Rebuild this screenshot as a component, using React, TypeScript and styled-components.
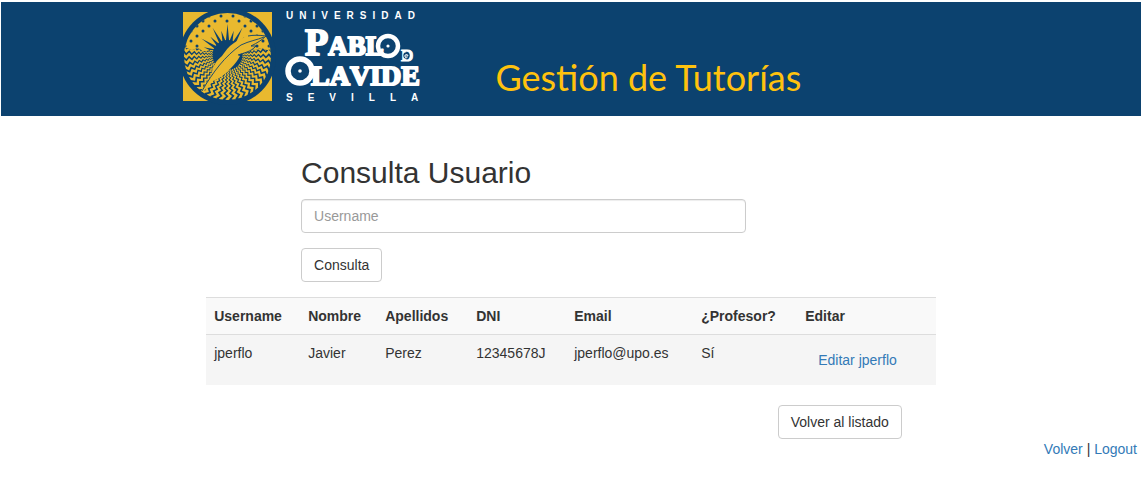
import React from "react";
import styled, { createGlobalStyle } from "styled-components";

const NAVY = "#0c426f";
const GOLD = "#e9b92f";

const GlobalStyle = createGlobalStyle`
  *, *::before, *::after { box-sizing: border-box; }
  body {
    margin: 0;
    background: #fff;
    color: #333;
    font-family: "Liberation Sans", Arial, sans-serif;
    font-size: 14px;
    line-height: 20px;
  }
`;

const Page = styled.div`
  padding: 2px 2px 0 1px;
`;

const Banner = styled.header`
  display: flex;
  align-items: flex-start;
  height: 114px;
  padding-left: 16%;
  background: ${NAVY};
`;

const LogoLink = styled.a`
  display: block;
  flex: none;
  padding-top: 6px;
`;

const Wordmark = styled.g`
  fill: #fff;
  stroke: #fff;
  stroke-width: 2px;
  stroke-linejoin: round;
  font-family: "Liberation Serif", "Times New Roman", serif;
  font-weight: 700;
  font-kerning: none;
`;

const BannerTitle = styled.div`
  margin: 53px 0 0 52px;
  color: #ffc20e;
  font-family: Lato, sans-serif;
  font-size: 36px;
  line-height: 44px;
  white-space: nowrap;
`;

const Content = styled.main`
  width: 64%;
  margin: 0 auto;
  padding-top: 20px;
`;

const SearchForm = styled.form`
  width: 61%;
  margin-left: 13%;
`;

const Heading = styled.h2`
  margin: 20px 0 10px;
  font-size: 30px;
  font-weight: 400;
  line-height: 33px;
`;

const TextField = styled.input`
  display: block;
  width: 100%;
  height: 34px;
  margin-bottom: 15px;
  padding: 6px 12px;
  border: 1px solid #ccc;
  border-radius: 4px;
  background: #fff;
  box-shadow: inset 0 1px 1px rgba(0, 0, 0, 0.075);
  color: #555;
  font: inherit;

  &::placeholder {
    color: #999;
    opacity: 1;
  }
`;

const Button = styled.button`
  display: inline-block;
  padding: 6px 12px;
  border: 1px solid #ccc;
  border-radius: 4px;
  background: #fff;
  color: #333;
  font: inherit;
  white-space: nowrap;
  cursor: pointer;
`;

const Link = styled.a`
  color: #337ab7;
  text-decoration: none;
`;

const ButtonLink = styled(Link)`
  display: inline-block;
  padding: 6px 12px;
  border: 1px solid transparent;
  vertical-align: middle;
  white-space: nowrap;
`;

const Table = styled.table`
  width: 100%;
  margin: 15px 0 20px;
  table-layout: fixed;
  border-collapse: collapse;
  text-align: left;
`;

const Column = styled.col<{ $width: number }>`
  width: ${({ $width }) => $width}px;
`;

const HeadCell = styled.th`
  padding: 8px;
  border-top: 1px solid #ddd;
  border-bottom: 1px solid #ddd;
  background: #f9f9f9;
`;

const Cell = styled.td`
  padding: 8px;
  background: #f5f5f5;
  vertical-align: top;
`;

const Actions = styled.div`
  display: flex;
  justify-content: flex-end;
  padding-right: 34px;
`;

const Footer = styled.footer`
  padding-right: 4px;
  text-align: right;
`;

/* One zigzag ray of the lower half of the seal, widening away from the centre. */
const wavyRay = (angle: number, width: number) => {
  const radii: number[] = [];
  for (let r = 13; r <= 48; r *= 1.075) radii.push(r);
  const point = (r: number, i: number, shift: number) => {
    const a = angle + shift + (i % 2 ? 0.038 : -0.038);
    return `${(44.5 + r * Math.cos(a)).toFixed(2)},${(43 + r * Math.sin(a)).toFixed(2)}`;
  };
  const near = radii.map((r, i) => point(r, i, 0));
  const far = radii.map((r, i) => point(r, i, width)).reverse();
  return [...near, ...far].join(" ");
};

const RAY_COUNT = 27;
const RAY_STEP = (Math.PI * 1.24) / RAY_COUNT;
const rays = Array.from({ length: RAY_COUNT }, (_, i) =>
  wavyRay(-Math.PI * 0.12 + i * RAY_STEP, RAY_STEP * 0.58)
);

/* Long and short spikes that fan out above the dark centre. */
const spikes = Array.from({ length: 13 }, (_, i) => {
  const a = Math.PI * (1.02 + (i * 0.96) / 12);
  const r = i % 2 ? 25 : 31;
  const at = (radius: number, angle: number) =>
    `${(44.5 + radius * Math.cos(angle)).toFixed(2)},${(43 + radius * Math.sin(angle)).toFixed(2)}`;
  return `${at(13, a - 0.13)} ${at(r, a)} ${at(13, a + 0.13)}`;
});

const dots: [number, number][] = [];
for (let row = 0; row < 8; row++) {
  for (let col = 0; col < 9; col++) {
    const x = 2 + col * 12 + (row % 2 ? 6 : 0);
    const y = 4 + row * 5;
    if (Math.hypot(x - 44.5, y - 43) > 30 && y < 35) dots.push([x, y]);
  }
}

const Logo = () => (
  <svg width="260" height="100" viewBox="0 0 260 100" role="img" aria-label="Universidad Pablo de Olavide, Sevilla">
    <defs>
      <clipPath id="disc">
        <circle cx="44.5" cy="44.5" r="43.5" />
      </clipPath>
      <clipPath id="sea">
        <path d="M0 37 q3 -2 6 0 t6 0 t6 1 t8 0 L62 37 q4 -2 7 0 t6 0 t6 0 t8 0 V89 H0Z" />
      </clipPath>
    </defs>
    <g transform="translate(0 4)">
      <rect width="89" height="89" fill={GOLD} />
      <circle cx="44.5" cy="44.5" r="48.5" fill={NAVY} />
      <g clipPath="url(#disc)">
        <rect width="89" height="39" fill={GOLD} />
        {dots.map(([x, y]) => (
          <circle key={`${x}-${y}`} cx={x} cy={y} r="1.5" fill={NAVY} />
        ))}
        {spikes.map((points) => (
          <polygon key={points} points={points} fill={NAVY} />
        ))}
        <g clipPath="url(#sea)">
          <rect y="34" width="89" height="55" fill={NAVY} />
          {rays.map((points) => (
            <polygon key={points} points={points} fill={GOLD} />
          ))}
        </g>
        <circle cx="44.5" cy="43" r="15" fill={NAVY} />
      </g>
      <path
        d="M83 24 C76 23 70 23 65 24 C58 26 52 30 47 34 C43 38 41 41 39 44 C36 47 33 49 32 52 C29 57 29 61 28 64 L18 79 L20 80 L30 69 C38 66 43 61 48 56 C52 52 55 48 57 44 L55 43 C60 41 68 40 73 34 L68 34 C74 31 79 28 83 24Z"
        fill={GOLD}
      />
      <path
        d="M19 79 C30 60 42 44 58 33 M58 33 C66 29 74 28 81 25 M83 24 C76 23 70 23 65 24 M83 24 C79 28 74 31 68 34 L73 34 C68 40 60 41 55 43"
        fill="none"
        stroke={NAVY}
        strokeWidth="0.9"
      />
    </g>
    <g fill="#fff" fontFamily="Liberation Sans, Arial, sans-serif" fontSize="10" fontWeight="700">
      <text x="103" y="11" letterSpacing="6">UNIVERSIDAD</text>
      <text x="103" y="93" letterSpacing="15">SEVILLA</text>
    </g>
    <Wordmark>
      <text x="122" y="47" fontSize="27">
        <tspan fontSize="38">P</tspan>ABL
      </text>
      <text x="128" y="77" fontSize="28">LAVIDE</text>
      <text x="218" y="53" fontSize="17" strokeWidth="1">D</text>
    </Wordmark>
    <g fill="none" stroke="#fff">
      <circle cx="205" cy="38" r="10" strokeWidth="4.5" />
      <circle cx="117" cy="63" r="12" strokeWidth="5.5" />
    </g>
    <circle cx="205" cy="38" r="1.6" fill="#fff" />
    <circle cx="117" cy="63" r="1.8" fill="#fff" />
    <circle cx="223.5" cy="47.5" r="3.2" fill={NAVY} />
    <path d="M222 48 h3 a1.6 1.6 0 1 0 -0.6 1.4" fill="none" stroke="#fff" strokeWidth="0.9" />
  </svg>
);

const columns = [
  { label: "Username", width: 94 },
  { label: "Nombre", width: 77 },
  { label: "Apellidos", width: 91 },
  { label: "DNI", width: 98 },
  { label: "Email", width: 127 },
  { label: "¿Profesor?", width: 104 },
  { label: "Editar", width: 139 },
];

const users = [
  {
    username: "jperflo",
    nombre: "Javier",
    apellidos: "Perez",
    dni: "12345678J",
    email: "jperflo@upo.es",
    profesor: true,
  },
];

export default function App() {
  return (
    <Page>
      <GlobalStyle />
      <Banner>
        <LogoLink href="#inicio">
          <Logo />
        </LogoLink>
        <BannerTitle>Gestión de Tutorías</BannerTitle>
      </Banner>
      <Content>
        <SearchForm onSubmit={(event) => event.preventDefault()}>
          <Heading>Consulta Usuario</Heading>
          <TextField type="text" name="username" placeholder="Username" aria-label="Username" />
          <Button type="submit">Consulta</Button>
        </SearchForm>
        <Table>
          <colgroup>
            {columns.map((column) => (
              <Column key={column.label} $width={column.width} />
            ))}
          </colgroup>
          <thead>
            <tr>
              {columns.map((column) => (
                <HeadCell key={column.label} scope="col">{column.label}</HeadCell>
              ))}
            </tr>
          </thead>
          <tbody>
            {users.map((user) => (
              <tr key={user.username}>
                <Cell>{user.username}</Cell>
                <Cell>{user.nombre}</Cell>
                <Cell>{user.apellidos}</Cell>
                <Cell>{user.dni}</Cell>
                <Cell>{user.email}</Cell>
                <Cell>{user.profesor ? "Sí" : "No"}</Cell>
                <Cell>
                  <ButtonLink href={`#editar-${user.username}`}>Editar {user.username}</ButtonLink>
                </Cell>
              </tr>
            ))}
          </tbody>
        </Table>
        <Actions>
          <Button type="button">Volver al listado</Button>
        </Actions>
      </Content>
      <Footer>
        <Link href="#volver">Volver</Link> | <Link href="#logout">Logout</Link>
      </Footer>
    </Page>
  );
}
